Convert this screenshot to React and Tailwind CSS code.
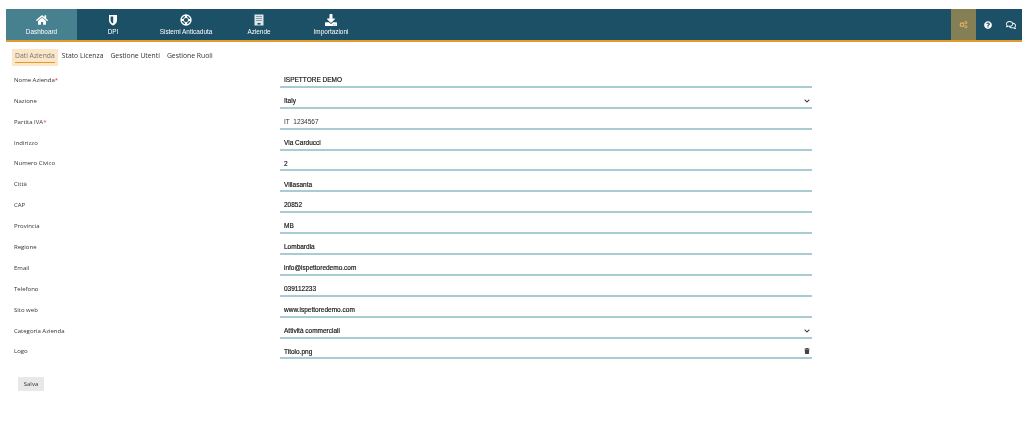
import React from 'react';
import { FaHome, FaDownload, FaChevronDown, FaTrash, FaQuestionCircle, FaRegComments } from 'react-icons/fa';

const ShieldIcon = ({ className }) => (
  <svg viewBox="0 0 12 12" className={className}>
    <path d="M2 1h8v5.5C10 9 8 10.6 6 11.5 4 10.6 2 9 2 6.5z" fill="#fff" />
    <path d="M3.6 2.4h2.6v7.2C4.6 8.8 3.6 7.8 3.6 6.3z" fill="#1b5066" />
  </svg>
);

const RingIcon = ({ className }) => (
  <svg viewBox="0 0 12 12" className={className}>
    <circle cx="6" cy="6" r="5" fill="none" stroke="#fff" strokeWidth="1.3" />
    <path d="M4.9 1h2.2v10H4.9zM1 4.9h10v2.2H1z" fill="#fff" />
    <circle cx="6" cy="6" r="2.6" fill="#1b5066" stroke="#fff" strokeWidth="0.9" />
  </svg>
);

const BuildingIcon = ({ className }) => (
  <svg viewBox="0 0 12 12" className={className}>
    <rect x="1.5" y="0.5" width="9" height="11" fill="#dfe5e8" />
    <path d="M3 2.5h6M3 4.5h6M3 6.5h6" stroke="#7d98a5" strokeWidth="0.9" />
    <rect x="4.5" y="9" width="3" height="1.6" fill="#1b5066" />
  </svg>
);

const CogsIcon = ({ className }) => (
  <svg viewBox="0 0 12 12" className={className}>
    <circle cx="4" cy="6.2" r="2.4" fill="none" stroke="currentColor" strokeWidth="1.6" />
    <circle cx="9.2" cy="3.4" r="1.5" fill="none" stroke="currentColor" strokeWidth="1.2" />
    <circle cx="9.2" cy="9" r="1.5" fill="none" stroke="currentColor" strokeWidth="1.2" />
  </svg>
);

const navItems = [
  { label: 'Dashboard', icon: FaHome, width: 'w-[71px]', active: true },
  { label: 'DPI', icon: ShieldIcon, width: 'w-[72px]' },
  { label: 'Sistemi Anticaduta', icon: RingIcon, width: 'w-[74px]' },
  { label: 'Aziende', icon: BuildingIcon, width: 'w-[72px]' },
  { label: 'Importazioni', icon: FaDownload, width: 'w-[72px]' },
];

const tabs = ['Dati Azienda', 'Stato Licenza', 'Gestione Utenti', 'Gestione Ruoli'];

const rows = [
  { label: 'Nome Azienda', value: 'ISPETTORE DEMO', required: true },
  { label: 'Nazione', value: 'Italy', select: true },
  { label: 'Partita IVA', value: 'IT  1234567', required: true, light: true },
  { label: 'Indirizzo', value: 'Via Carducci' },
  { label: 'Numero Civico', value: '2' },
  { label: 'Città', value: 'Villasanta' },
  { label: 'CAP', value: '20852' },
  { label: 'Provincia', value: 'MB' },
  { label: 'Regione', value: 'Lombardia' },
  { label: 'Email', value: 'info@ispettoredemo.com' },
  { label: 'Telefono', value: '039112233' },
  { label: 'Sito web', value: 'www.ispettoredemo.com' },
  { label: 'Categoria Azienda', value: 'Attività commerciali', select: true },
  { label: 'Logo', value: 'Titolo.png', trash: true },
];

export default function App() {
  return (
    <div className="h-[438px] w-[1024px] overflow-hidden bg-white pt-[9px] pr-[2px] pl-[6px] font-['Open_Sans',sans-serif] blur-[0.35px]">
      {/* Barra superiore */}
      <div className="flex h-[33px] items-stretch border-b-2 border-[#e39a2d] bg-[#1b5066]">
        {navItems.map((item) => (
          <div
            key={item.label}
            className={`flex flex-col items-center justify-center gap-[2px] text-white ${item.width} ${
              item.active ? 'bg-[#47808f]' : ''
            }`}
          >
            <item.icon className="h-[12px] w-[12px]" />
            <span className="font-['Liberation_Sans',sans-serif] text-[6.4px] leading-[8px]">{item.label}</span>
          </div>
        ))}
        <div className="ml-auto flex items-stretch">
          <div className="flex w-[25px] items-center justify-center bg-[#857f55] text-[#e8b26a]">
            <CogsIcon className="h-[9px] w-[9px]" />
          </div>
          <div className="flex w-[24px] items-center justify-center text-white">
            <FaQuestionCircle className="h-[8px] w-[8px]" />
          </div>
          <div className="flex w-[22px] items-center justify-center text-white">
            <FaRegComments className="h-[10px] w-[10px]" />
          </div>
        </div>
      </div>

      {/* Schede */}
      <div className="mt-[7px] flex gap-[7px] pl-[9px] text-[6.8px] leading-[9px] text-[#333]">
        {tabs.map((tab, i) => (
          <div key={tab} className={i === 0 ? '-mx-[3px] h-[17px] bg-[#fbe6c8] px-[3px] pt-[2px] text-[#777]' : 'pt-[2px]'}>
            <div className={i === 0 ? 'h-[12px] border-b border-[#e39a2d]' : ''}>{tab}</div>
          </div>
        ))}
      </div>

      {/* Modulo */}
      <div className="mt-[1px] flex flex-col pl-[8px]">
        {rows.map((row) => (
          <div key={row.label} className="flex h-[20.9px] items-end">
            <div className="w-[266px] pb-[3px] text-[6px] text-[#333]">
              {row.label}
              {row.required && <span className="text-red-500">*</span>}
            </div>
            <div className="flex h-full w-[532px] items-end justify-between border-b-2 border-[#a9cbd3] pr-[2px] pb-[1px] pl-[4px] font-['Liberation_Sans',sans-serif] text-[6.5px] text-[#111]">
              <span className={`whitespace-pre ${row.light ? 'text-[#333]' : '[-webkit-text-stroke:0.15px_#111]'}`}>{row.value}</span>
              {row.select && <FaChevronDown className="mb-[2px] h-[6px] w-[6px] text-[#333]" />}
              {row.trash && <FaTrash className="mb-[2px] h-[6px] w-[6px] text-[#444]" />}
            </div>
          </div>
        ))}
      </div>

      <button className="mt-[18px] ml-[12px] h-[14px] w-[26px] bg-[#e8e8e8] text-[6px] text-[#333]">Salva</button>
    </div>
  );
}
